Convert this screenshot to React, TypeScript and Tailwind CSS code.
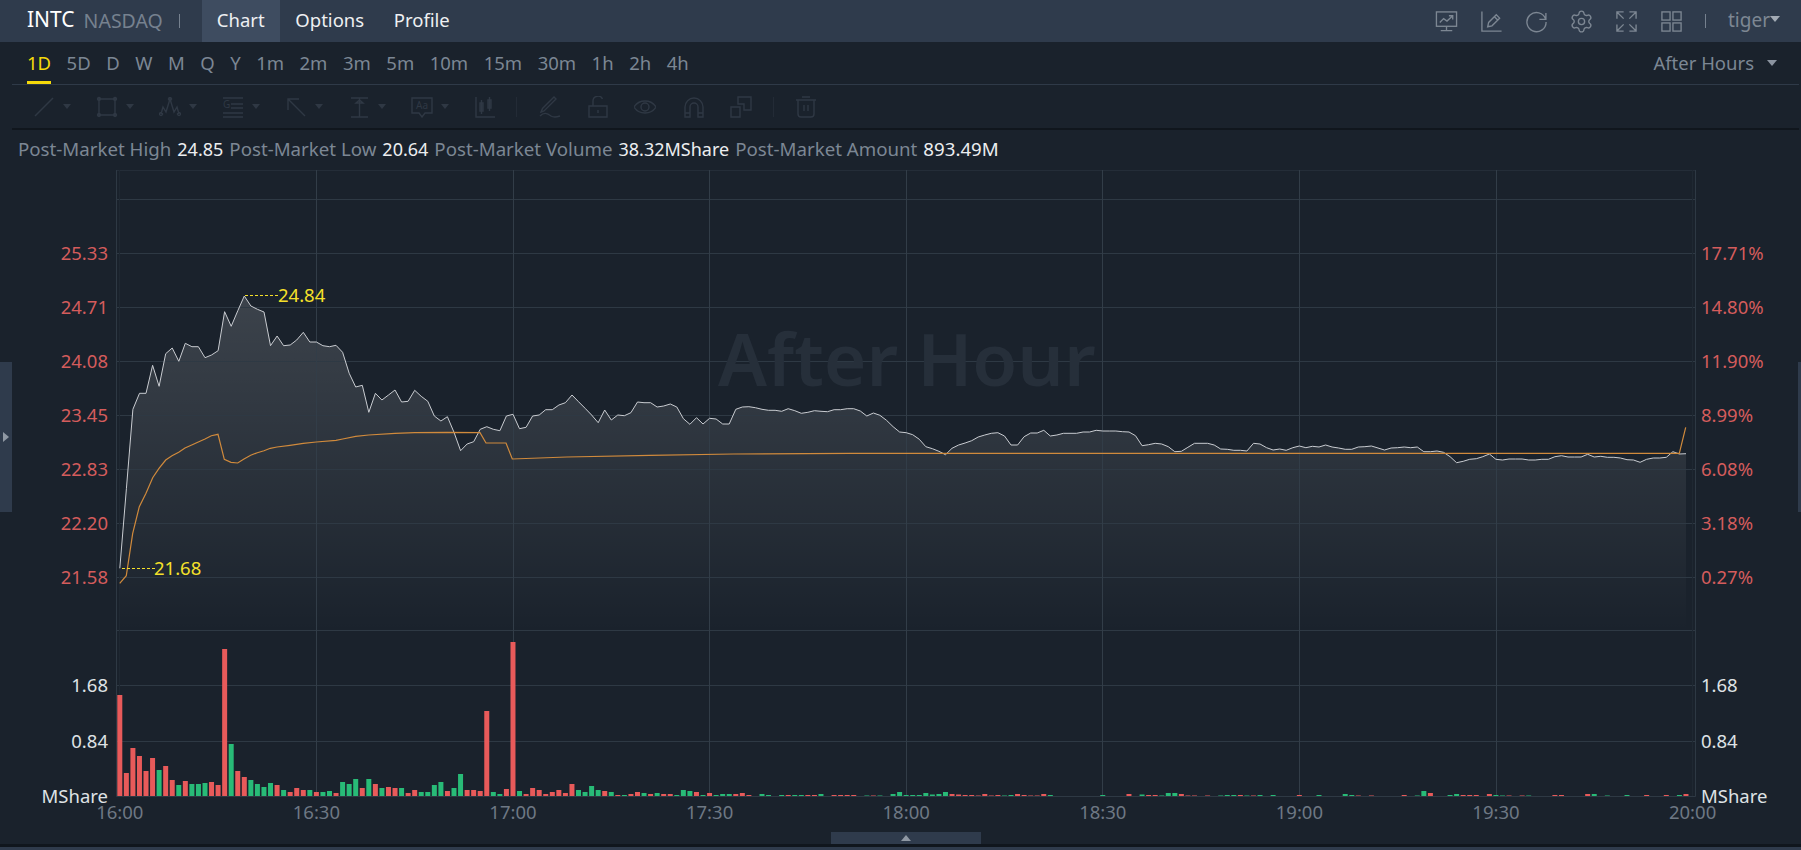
import { Settings } from "lucide-react";

const FONT = "font-['Noto_Sans','Open_Sans',sans-serif]";

// price line, y in page px, one point a minute
const PRICE = [
  568.3, 488.7, 409.3, 393.3, 393.3, 365.3, 386.3, 353.7, 348, 361.3, 343.3, 346.7, 346.7, 357.7, 355, 350.7, 311.7, 326.3,
  310.7, 296, 306, 309.3, 312, 345.7, 336, 345.7, 345, 340, 332.3, 342, 342, 345.7, 346.7, 345.3, 352.3, 373.3, 387, 385.3,
  412.3, 393.3, 400, 395, 390, 402, 401.3, 390.3, 396.3, 401.3, 416, 421, 416.7, 432.3, 450.7, 444, 441.7, 429.3, 426.7,
  429.3, 430.7, 416, 414.3, 428.7, 427.3, 416, 415, 409.7, 409.7, 405, 402.7, 395, 401.7, 408.3, 415, 422.7, 410, 420, 415,
  415.7, 412.7, 402, 402.7, 402.7, 407, 406, 404, 407, 418.7, 424.3, 417.7, 424, 418.3, 419, 424, 424, 409.3, 407, 406.7,
  407.7, 409.3, 410.3, 410.3, 411.3, 408.7, 410.7, 413.3, 412.3, 410.7, 411.3, 411.7, 409.7, 409.7, 408.7, 408.7, 411, 416,
  413, 415.3, 420.3, 426.7, 432, 432.7, 434.7, 439.3, 446.7, 448.7, 451.3, 454.7, 448.3, 445, 443, 440.7, 437, 435, 433.3,
  432.7, 436, 445, 445, 436.7, 433, 433, 430.3, 436, 435, 433.3, 433.3, 433.3, 432, 432, 430.3, 431, 431, 431, 431.7, 432,
  435.7, 445.7, 444.7, 443.3, 444, 446.7, 451.7, 451.3, 447.3, 443.3, 443.3, 443.3, 445, 449, 449.3, 450.3, 450.3, 451, 443.3,
  444, 447.7, 450, 449, 450.3, 447.7, 446, 447.7, 446.3, 447, 445, 447, 448, 449.3, 449.3, 447, 446.7, 446, 448, 450, 448,
  447.7, 447, 447.7, 447, 451.7, 451.7, 451, 452.3, 456.7, 462.7, 461.3, 459.3, 458.7, 456.7, 454, 459.3, 460, 459, 459, 459,
  460, 460, 459.3, 459.3, 456.7, 455.7, 457, 457, 457, 454.3, 457, 456.3, 457.3, 457.3, 458, 459.7, 460, 462.3, 459.3, 458,
  458, 457.3, 451.7, 454, 453.7,
];

// average line, [x, y] in page px
const AVERAGE: [number, number][] = [
  [119.7, 583.3], [126.3, 575.7], [132.7, 533.3], [139.3, 506.7], [146, 493.3], [152.7, 477.7], [159, 468.3], [165.7, 460],
  [172, 455.7], [178.7, 452.3], [185, 448], [191.7, 445], [198.3, 442], [205, 439], [211.3, 435.7], [218, 434.3], [224.3, 459.3],
  [231, 462.3], [237.7, 463], [244, 459], [250.7, 455.3], [257.3, 452.7], [264, 450.7], [270.3, 448.3], [277, 447], [290, 445.3],
  [303.3, 443.3], [316.3, 442], [336, 440.3], [342.7, 439], [355.7, 436.3], [368.7, 435], [395, 433.3], [414.7, 432.7],
  [447.3, 432.3], [480, 432.7], [486, 443], [506, 443], [512.3, 459], [566.7, 457], [650, 455.3], [733.3, 454], [850, 453.3],
  [1679.3, 453.3], [1685.7, 427.3],
];

// volume bars 0..140, positive is red, negative is green
const VOLUME = [
  101, 23, 48, 40, 25, 38, -26, 30, 16, -11, 15, -12, -12, -13, 14, 11, 147, -52, 25, 19, -16, -12, -9, -13, 11, -6, 4, 8, 6, -6,
  4, -4, -5, 3, -14, -12, -17, 8, -17, 12, -8, 9, 8, -8, 3, 6, -4, -4, -11, -14, 5, -8, -22, 6, 6, 5, 85, -4, -2, 7, 154, -5, 2, 8,
  6, 2, 4, 6, 3, 12, -6, -4, -10, -6, 5, -4, 1, -1, 2, 4, -3, 2, -3, 2, 2, -1, -6, -5, 4, -1, 3, -1, -2, -2, 2, 3, 1, 0, -2, -1, 0,
  -1, 1, -1, -1, 1, 1, -2, 0, 1, 1, 1, 1, 0, -0.5, 0.5, -0.5, 0, -2, -4, -1, -1, -1, -3, -1.5, -2, -4, 2, 1.5, 1, 1, 0.5, 2, 0.5, 1,
  -0.5, -1, 2, 1, 0.5, 0.5,
];

// the tail of the volume pane is nearly empty
const VOLUME_TAIL: Record<number, number> = {
  141: 2, 142: -1, 150: -1, 154: 2, 156: -1.5, 157: 1, 158: 1, 159: -0.5, 160: -3, 161: -3, 162: 2, 163: 0.5, 164: 0.5, 166: 0.5,
  168: -0.5, 169: -1, 170: -1, 171: 1, 172: -0.5, 173: 0.5, 174: -1, 176: -1, 180: 1, 183: -1, 187: -2, 188: -1, 189: 0.5, 191: 0.5,
  196: 1, 198: -0.5, 199: -5, 200: 3, 203: -1, 204: -2, 205: 1, 206: 1, 207: 1, 209: 2, 210: -1, 211: -0.5, 212: 0.5, 214: 0.5,
  215: -0.5, 219: 1, 220: 1, 224: 2, 225: -2, 227: -0.5, 230: -1, 233: 1, 236: 1, 238: -1, 239: 2,
};

const X0 = 119.8;
const STEP = 6.553;
const xAt = (i: number) => X0 + STEP * i;

const TIME_X = ["16:00", "16:30", "17:00", "17:30", "18:00", "18:30", "19:00", "19:30", "20:00"];
const H_LINES = [199, 253, 307, 361, 415, 469, 523, 577, 630, 685, 741];
const PRICES = [
  { y: 253, left: "25.33", right: "17.71%" },
  { y: 307, left: "24.71", right: "14.80%" },
  { y: 361, left: "24.08", right: "11.90%" },
  { y: 415, left: "23.45", right: "8.99%" },
  { y: 469, left: "22.83", right: "6.08%" },
  { y: 523, left: "22.20", right: "3.18%" },
  { y: 577, left: "21.58", right: "0.27%" },
];
const VOL_LABELS = [
  { y: 685, text: "1.68" },
  { y: 741, text: "0.84" },
  { y: 796, text: "MShare" },
];
const FRAMES = ["5D", "D", "W", "M", "Q", "Y", "1m", "2m", "3m", "5m", "10m", "15m", "30m", "1h", "2h", "4h"];

const pricePath = PRICE.map((y, i) => `${i === 0 ? "M" : "L"}${xAt(i).toFixed(1)} ${y}`).join(" ");
const areaPath = `${pricePath} L${xAt(239).toFixed(1)} 632 L${X0} 632 Z`;
const avgPath = AVERAGE.map(([x, y], i) => `${i === 0 ? "M" : "L"}${x} ${y}`).join(" ");

const ToolIcon = ({ d }: { d: string }) => (
  <svg width="22" height="22" viewBox="0 0 22 22" fill="none" stroke="#2f3844" strokeWidth="1.4" className="shrink-0">
    <path d={d} />
  </svg>
);

const DrawGroup = ({ d, children }: { d: string; children?: React.ReactNode }) => (
  <div className="relative w-[63px] shrink-0 flex items-center">
    <ToolIcon d={d} />
    {children}
    <div className="ml-[8px] w-0 h-0 border-x-[4px] border-x-transparent border-t-[5px] border-t-[#2f3844]" />
  </div>
);

const HeaderIcon = ({ children }: { children: React.ReactNode }) => (
  <svg width="23" height="23" viewBox="0 0 24 24" fill="none" stroke="#7d8793" strokeWidth="1.4">
    {children}
  </svg>
);

export default function App() {
  return (
    <div className={`relative w-[1801px] h-[850px] overflow-hidden flex flex-col bg-[#1a222c] ${FONT}`}>
      {/* Header */}
      <div className="h-[42px] shrink-0 flex items-center bg-[#2f3b4c] text-[18.5px]">
        <span className="ml-[27px] pb-[2px] text-[21px] text-white">INTC</span>
        <span className="ml-[9px] pb-[1px] text-[19.5px] text-[#76818f]">NASDAQ</span>
        <span className="ml-[16px] w-px h-[14px] bg-[#76818f]" />
        <div className="ml-[22px] h-full w-[78px] pb-[2px] flex items-center justify-center bg-[#3e4c60] text-[#eef0f2]">Chart</div>
        <div className="h-full w-[100px] pb-[2px] flex items-center justify-center text-[#eef0f2]">Options</div>
        <div className="h-full ml-[14px] pb-[2px] flex items-center text-[#eef0f2]">Profile</div>
        <div className="ml-auto flex items-center gap-[22px] mr-[118px]">
          <HeaderIcon>
            <rect x="1.5" y="2" width="21" height="15" />
            <path d="M12 17v4.500M6 21.500h12M5 13l4-4 3.500 2.500L18 6.500M14.500 6H18.500V10" />
          </HeaderIcon>
          <HeaderIcon>
            <path d="M2 1.500V22H22.500M8 17.500l1-4.500L17 5l3.500 3.500-8 8zM15 7l3.500 3.500" />
          </HeaderIcon>
          <HeaderIcon>
            <path d="M21.500 9.500A10 10 0 1 0 22 12.500M21.800 3v6.800H15" />
          </HeaderIcon>
          <Settings size={25} color="#7d8793" strokeWidth={1.3} className="-mx-[1px]" />
          <HeaderIcon>
            <path d="M2 9V2h7M2 2l7 7M15 2h7v7M22 2l-7 7M2 15v7h7M2 22l7-7M15 22h7v-7M22 22l-7-7" />
          </HeaderIcon>
          <HeaderIcon>
            <rect x="2" y="2" width="8.500" height="8.500" />
            <rect x="13.500" y="2" width="8.500" height="8.500" />
            <rect x="2" y="13.500" width="8.500" height="8.500" />
            <rect x="13.500" y="13.500" width="8.500" height="8.500" />
          </HeaderIcon>
        </div>
      </div>
      <div className="absolute top-[14px] left-[1705px] w-px h-[14px] bg-[#76818f]" />
      <div className="absolute top-[6px] left-[1728px] flex items-center text-[19px] text-[#7d8793]">
        tiger
        <span className="w-0 h-0 border-x-[5px] border-x-transparent border-t-[6px] border-t-[#a3abb5] mb-[2px]" />
      </div>

      {/* Timeframes */}
      <div className="h-[43px] shrink-0 ml-[12px] mr-[2px] flex items-center border-b border-[#2f3a48] text-[18.5px] text-[#7c8794]">
        <div className="ml-[15px] flex items-center gap-[15.5px] h-full">
          <span className="relative h-full flex items-center text-[#f5d90a]">
            1D
            <span className="absolute left-0 right-0 bottom-0 h-[3px] bg-[#f5d90a]" />
          </span>
          {FRAMES.map((f) => (
            <span key={f}>{f}</span>
          ))}
        </div>
        <div className="ml-auto mr-[22px] flex items-center">
          After Hours
          <span className="ml-[13px] w-0 h-0 border-x-[5px] border-x-transparent border-t-[6px] border-t-[#8b94a0]" />
        </div>
      </div>

      {/* Drawing tools */}
      <div className="h-[45px] shrink-0 ml-[12px] mr-[2px] flex items-center border-b-2 border-[#10161d] pl-[21px]">
        <DrawGroup d="M2 20L20 2" />
        <DrawGroup d="M3 3H19V19H3ZM3 1.500a1.500 1.500 0 1 0 .01 0M19 1.500a1.500 1.500 0 1 0 .01 0M3 17.500a1.500 1.500 0 1 0 .01 0M19 17.500a1.500 1.500 0 1 0 .01 0" />
        <DrawGroup d="M2 18L4 11 7 16 11 3 15 16 18 11 20 18M2 16.500a1.500 1.500 0 1 0 .01 0M11 1.500a1.500 1.500 0 1 0 .01 0M20 16.500a1.500 1.500 0 1 0 .01 0" />
        <DrawGroup d="M1 2H21M9 8H21M9 12H21M1 17H21M1 21H21">
          <span className="absolute left-[1px] top-[-2px] text-[10px] leading-[20px] text-[#2f3844]">G</span>
        </DrawGroup>
        <DrawGroup d="M20 20L3 3M3 14V3H14" />
        <DrawGroup d="M3 2H20M3 21H20M11.500 2V21M8 7l3.500-3L15 7Z" />
        <DrawGroup d="M1 2H21V17H14L11 21 8 17H1Z">
          <span className="absolute left-[5px] top-[-1px] text-[10px] leading-[20px] text-[#2f3844]">Aa</span>
        </DrawGroup>
        <ToolIcon d="M2 1V21H21M6 7H9V15H6ZM7.500 4V18M14 4H17V12H14ZM15.500 1V15" />
        <span className="ml-[20px] w-px h-[20px] bg-[#232b36]" />
        <div className="ml-[22px] mr-[26px]">
          <ToolIcon d="M2 16L5 15 17 3 15 1 3.500 12.500ZM1 20C5 16 8 17 12 20 15 22 18 21 21 20" />
        </div>
        <div className="mr-[25px]">
          <ToolIcon d="M2 10H20V21H2ZM6 10V5A5 5 0 0 1 15.500 3M11 14V17" />
        </div>
        <div className="mr-[27px]">
          <ToolIcon d="M0 11C5 3 17 3 22 11 17 19 5 19 0 11ZM11 7A4 4 0 1 0 11 15 4 4 0 0 0 11 7Z" />
        </div>
        <div className="mr-[25px]">
          <ToolIcon d="M2 21V11A9 9 0 0 1 20 11V21H15V11A4 4 0 0 0 7 11V21ZM2 17H7M15 17H20" />
        </div>
        <ToolIcon d="M1 11H10V21H1ZM8 1H21V14H14V8H8Z" />
        <span className="ml-[21px] w-px h-[20px] bg-[#232b36]" />
        <div className="ml-[21px]">
          <ToolIcon d="M1 4H21M7 1H15M3 4V18A3 3 0 0 0 6 21H16A3 3 0 0 0 19 18V4M9 9V15M13 9V15" />
        </div>
      </div>

      {/* Session stats */}
      <div className="h-[40px] shrink-0 pl-[18px] pb-[2px] flex items-center gap-[6px] text-[18.7px] text-[#7c8794]">
        <span>Post-Market High</span>
        <span className="text-[18px] text-[#eceef0]">24.85</span>
        <span>Post-Market Low</span>
        <span className="text-[18px] text-[#eceef0]">20.64</span>
        <span>Post-Market Volume</span>
        <span className="text-[18px] text-[#eceef0]">38.32MShare</span>
        <span>Post-Market Amount</span>
        <span className="text-[#eceef0]">893.49M</span>
      </div>

      {/* Chart */}
      <div className="relative flex-1">
        <svg className="absolute inset-0" width="1801" height="674" viewBox="0 170 1801 674" fill="none">
          <defs>
            <linearGradient id="area" x1="0" y1="296" x2="0" y2="632" gradientUnits="userSpaceOnUse">
              <stop offset="0" stopColor="#ffffff" stopOpacity="0.15" />
              <stop offset="1" stopColor="#ffffff" stopOpacity="0" />
            </linearGradient>
          </defs>
          <path d={areaPath} fill="url(#area)" />
          <path d="M116.500 170V796.500H1695.500V170ZM116.500 170" stroke="#2e3944" />
          {H_LINES.map((y) => (
            <path key={y} d={`M116 ${y + 0.5}H1695`} stroke="#2e3944" />
          ))}
          {TIME_X.map((t, k) => (
            <path key={t} d={`M${Math.floor(X0 + 196.6 * k) + 0.5} 170V796`} stroke={k === 0 || k === 8 ? "#1f2832" : "#323d48"} />
          ))}
          <path d={pricePath} stroke="#c9ccd1" strokeWidth="1" />
          <path d={avgPath} stroke="#d08a3c" strokeWidth="1.200" />
          {VOLUME.map((v, i) =>
            v === 0 ? null : (
              <rect key={i} x={xAt(i) - 2.5} y={796 - Math.abs(v)} width="5" height={Math.abs(v)} fill={v > 0 ? "#e85a5a" : "#28bb77"} />
            ),
          )}
          {Object.entries(VOLUME_TAIL).map(([k, v]) => (
            <rect key={k} x={xAt(Number(k)) - 2.5} y={796 - Math.abs(v)} width="5" height={Math.abs(v)} fill={v > 0 ? "#e85a5a" : "#28bb77"} />
          ))}
          <path d="M245 295.500H278M122 568.500H155" stroke="#f5e02a" strokeDasharray="3 2" />
        </svg>

        {/* watermark */}
        <span className="absolute left-[718px] top-[138px] text-[73px] leading-[100px] font-semibold text-[#262f3a]">After Hour</span>

        {PRICES.map((p) => (
          <div key={p.y}>
            <span className="absolute right-[1693px] -translate-y-1/2 text-[18.5px] leading-[24px] text-[#d45c5c]" style={{ top: p.y - 170 }}>
              {p.left}
            </span>
            <span className="absolute left-[1701px] -translate-y-1/2 text-[18.5px] leading-[24px] text-[#d45c5c]" style={{ top: p.y - 170 }}>
              {p.right}
            </span>
          </div>
        ))}
        {VOL_LABELS.map((p) => (
          <div key={p.y}>
            <span className="absolute right-[1693px] -translate-y-1/2 text-[18.5px] leading-[24px] text-[#dfe2e5]" style={{ top: p.y - 170 }}>
              {p.text}
            </span>
            <span className="absolute left-[1701px] -translate-y-1/2 text-[18.5px] leading-[24px] text-[#dfe2e5]" style={{ top: p.y - 170 }}>
              {p.text}
            </span>
          </div>
        ))}
        {TIME_X.map((t, k) => (
          <span key={t} className="absolute top-[630px] -translate-x-1/2 text-[18.5px] leading-[24px] text-[#6e7884]" style={{ left: X0 + 196.6 * k }}>
            {t}
          </span>
        ))}

        <span className="absolute left-[278px] top-[113px] text-[18.5px] leading-[24px] text-[#f5e02a]">24.84</span>
        <span className="absolute left-[154px] top-[386px] text-[18.5px] leading-[24px] text-[#f5e02a]">21.68</span>

        {/* collapse handle under the chart */}
        <div className="absolute left-[831px] top-[662px] w-[150px] h-[12px] flex items-center justify-center bg-[#2f3b4c]">
          <span className="w-0 h-0 border-x-[5px] border-x-transparent border-b-[6px] border-b-[#8f98a3]" />
        </div>
      </div>

      <div className="h-[6px] shrink-0 border-t-[3px] border-[#10161d] bg-[#2f3b4c]" />

      {/* side handles */}
      <div className="absolute left-0 top-[362px] w-[12px] h-[150px] flex items-center justify-center bg-[#2f3b4c]">
        <span className="w-0 h-0 border-y-[5px] border-y-transparent border-l-[6px] border-l-[#8f98a3]" />
      </div>
      <div className="absolute right-0 top-[362px] w-[3px] h-[150px] bg-[#2f3b4c]" />
    </div>
  );
}
